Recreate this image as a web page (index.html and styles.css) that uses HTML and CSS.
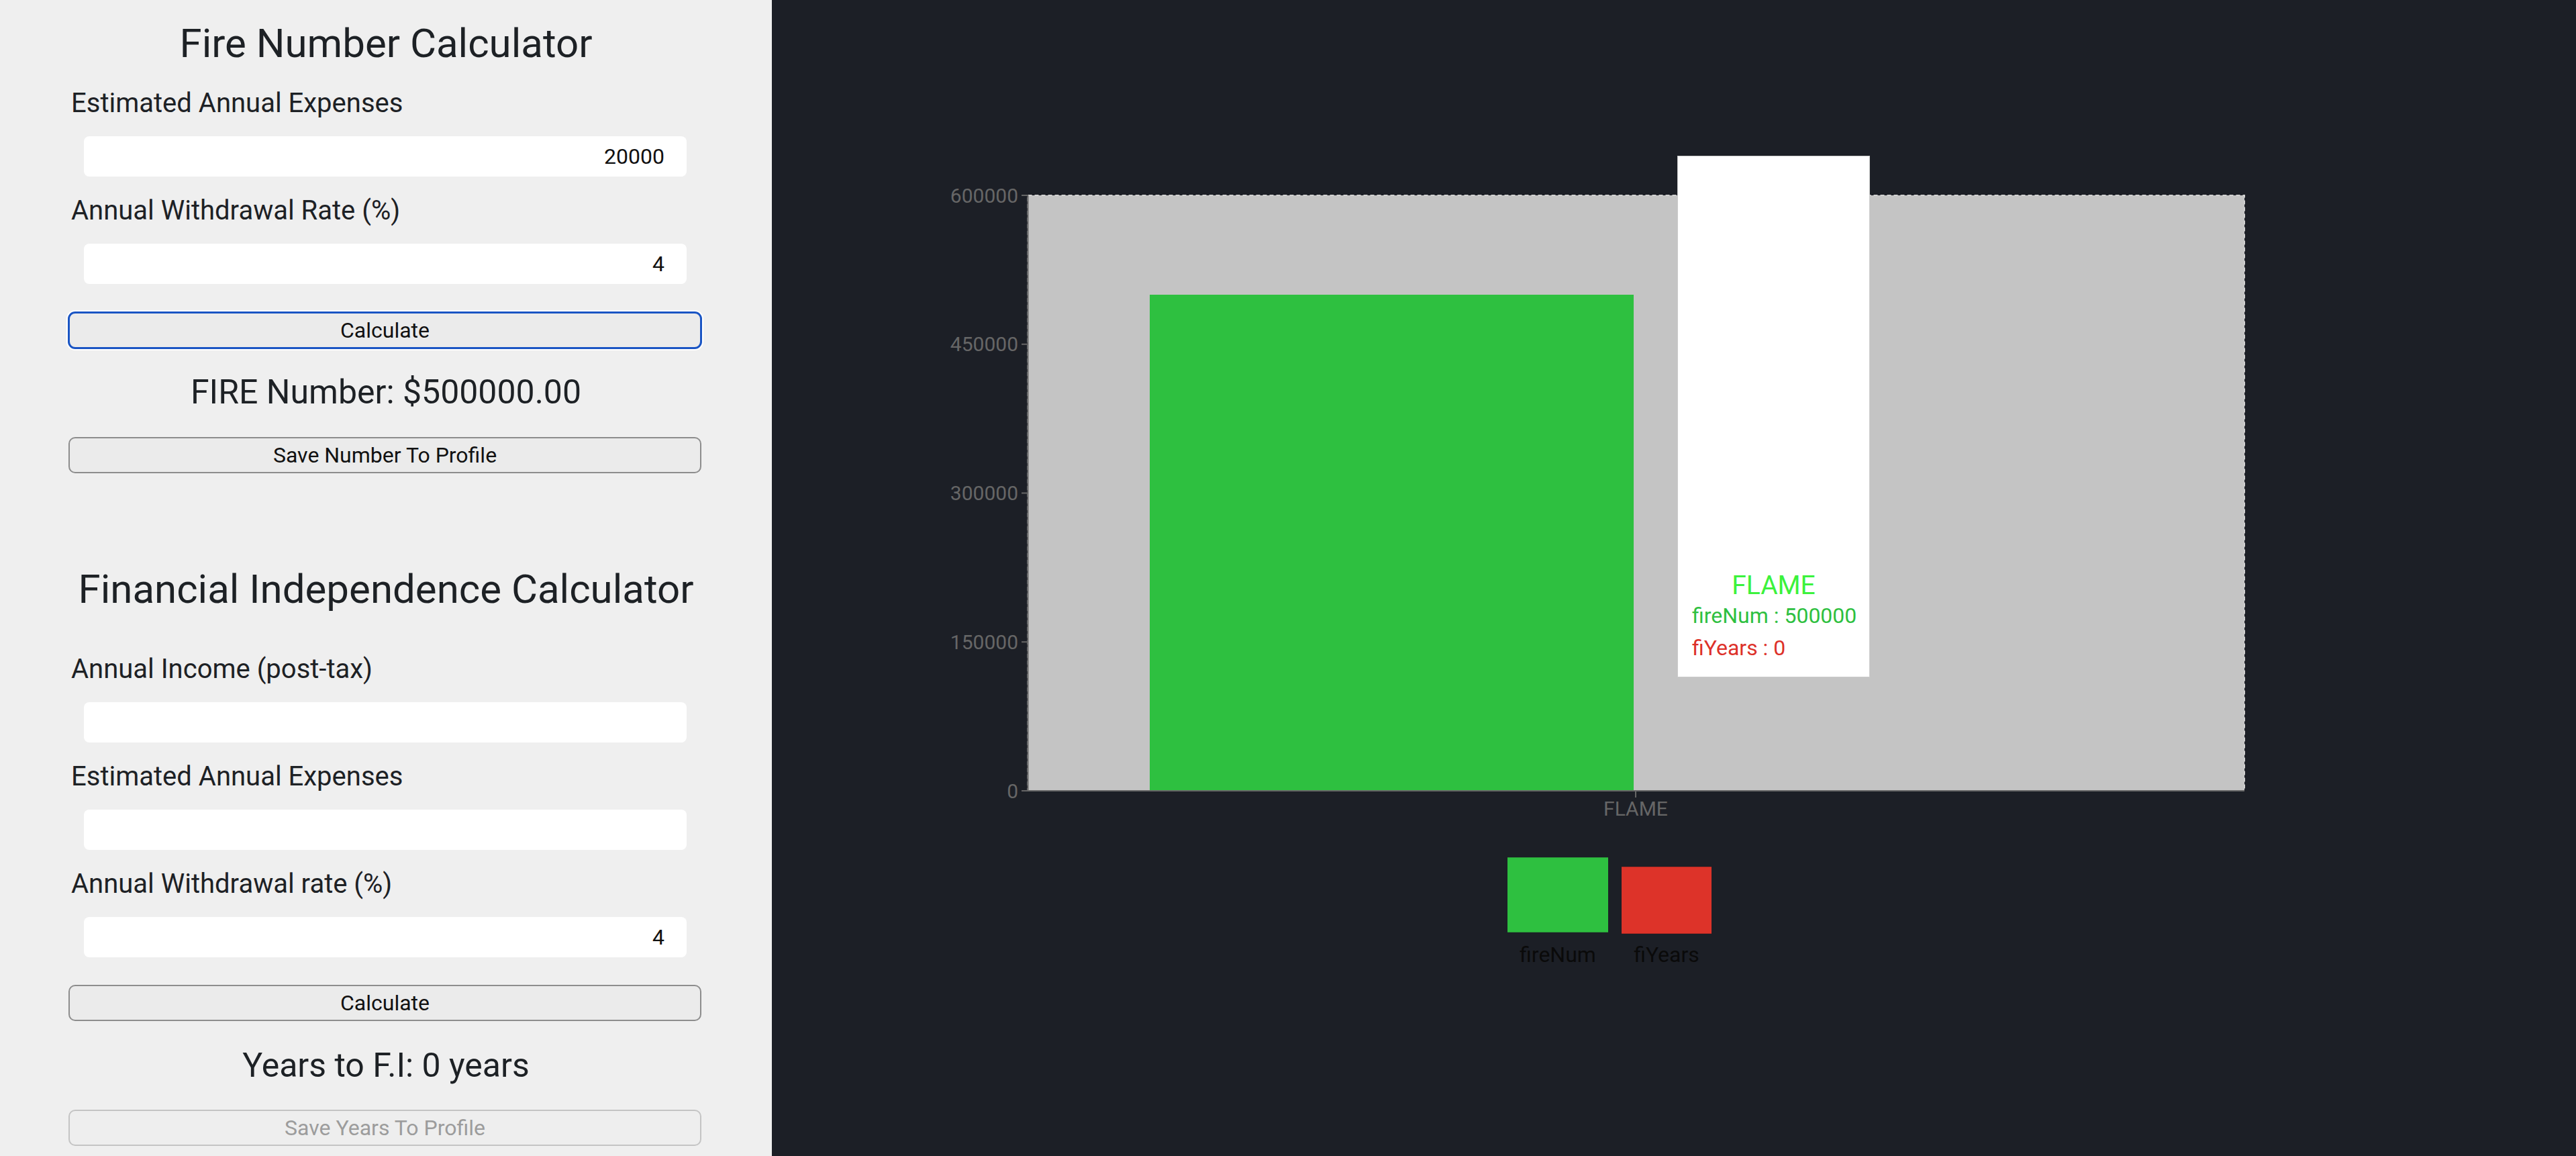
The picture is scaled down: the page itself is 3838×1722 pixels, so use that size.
FILE: index.html
```html
<!DOCTYPE html>
<html lang="en">
<head>
<meta charset="utf-8">
<title>FIRE Calculator</title>
<link rel="stylesheet" href="styles.css">
</head>
<body>
<div class="app">
  <aside class="panel">
    <section class="calc">
      <h2 class="calc-title">Fire Number Calculator</h2>
      <label class="field-label first">Estimated Annual Expenses</label>
      <input class="field-input" type="text" value="20000">
      <label class="field-label">Annual Withdrawal Rate (%)</label>
      <input class="field-input" type="text" value="4">
      <button class="btn btn-calc btn-focus">Calculate</button>
      <div class="result">FIRE Number: $500000.00</div>
      <button class="btn btn-save">Save Number To Profile</button>
    </section>
    <section class="calc calc-second">
      <h2 class="calc-title">Financial Independence Calculator</h2>
      <label class="field-label first-wide">Annual Income (post-tax)</label>
      <input class="field-input" type="text" value="">
      <label class="field-label">Estimated Annual Expenses</label>
      <input class="field-input" type="text" value="">
      <label class="field-label">Annual Withdrawal rate (%)</label>
      <input class="field-input" type="text" value="4">
      <button class="btn btn-calc">Calculate</button>
      <div class="result">Years to F.I: 0 years</div>
      <button class="btn btn-save" disabled>Save Years To Profile</button>
    </section>
  </aside>
  <main class="chart-area">
    <div class="chart">
      <svg class="chart-svg" width="2688" height="1250" viewBox="0 0 2688 1250">
        <rect x="381.5" y="291" width="1812.5" height="887" fill="#c4c4c4"/>
        <rect x="381.5" y="291" width="1812.5" height="887" fill="none" stroke="#d2d2d2" stroke-width="2" stroke-dasharray="6 4"/>
        <rect x="563" y="439" width="721" height="739" fill="#2ec040"/>
        <line x1="381.5" y1="291" x2="381.5" y2="1178" stroke="#666" stroke-width="2"/>
        <line x1="381.5" y1="1178" x2="2194" y2="1178" stroke="#666" stroke-width="2"/>
        <g stroke="#666" stroke-width="2">
          <line x1="372" y1="291" x2="382" y2="291"/>
          <line x1="372" y1="512.75" x2="382" y2="512.75"/>
          <line x1="372" y1="734.5" x2="382" y2="734.5"/>
          <line x1="372" y1="956.25" x2="382" y2="956.25"/>
          <line x1="372" y1="1178" x2="382" y2="1178"/>
          <line x1="1287" y1="1178" x2="1287" y2="1188"/>
        </g>
        <g class="axis-text" text-anchor="end">
          <text x="367" y="301.5">600000</text>
          <text x="367" y="523">450000</text>
          <text x="367" y="745">300000</text>
          <text x="367" y="966.5">150000</text>
          <text x="367" y="1188.5">0</text>
        </g>
        <text class="axis-text" x="1287" y="1214.5" text-anchor="middle">FLAME</text>
      </svg>
      <div class="tooltip">
        <div class="tooltip-label">FLAME</div>
        <div class="tooltip-item item-fire">fireNum : 500000</div>
        <div class="tooltip-item item-years">fiYears : 0</div>
      </div>
    </div>
    <div class="legend">
      <div class="legend-item">
        <span class="swatch swatch-fire"></span>
        <span class="legend-text text-fire">fireNum</span>
      </div>
      <div class="legend-item">
        <span class="swatch swatch-years"></span>
        <span class="legend-text text-years">fiYears</span>
      </div>
    </div>
  </main>
</div>
</body>
</html>
```

FILE: styles.css
```css
* { box-sizing: border-box; }

html, body {
  margin: 0;
  padding: 0;
}

body {
  font-family: "Roboto", "Liberation Sans", Arial, sans-serif;
  color: #1d2125;
  background: #1c1f26;
}

.app {
  display: flex;
  width: 3838px;
  height: 1722px;
  overflow: hidden;
}

.panel {
  width: 1150px;
  flex: 0 0 1150px;
  background: #efefef;
  padding-top: 30px;
}

.calc {
  display: flex;
  flex-direction: column;
  align-items: flex-start;
}

.calc-second .calc-title {
  margin-top: 138px;
}

.calc-title {
  align-self: stretch;
  margin: 0;
  font-size: 60px;
  line-height: 70px;
  font-weight: 400;
  text-align: center;
  color: #1d2125;
}

.field-label {
  display: block;
  margin: 28px 0 0 106px;
  font-size: 40px;
  line-height: 46px;
  color: #1d2125;
}

.field-label.first { margin-top: 31px; }
.field-label.first-wide { margin-top: 61px; }

.field-input {
  display: block;
  margin: 26px 0 0 125px;
  width: 898px;
  height: 60px;
  border: 0;
  border-radius: 8px;
  background: #ffffff;
  padding: 0 33px 0 0;
  text-align: right;
  font-family: "Roboto", "Liberation Sans", Arial, sans-serif;
  font-size: 32px;
  color: #111111;
  outline: none;
}

.btn {
  display: block;
  margin-left: 102px;
  width: 943px;
  height: 54px;
  border: 2px solid #8d8d8d;
  border-radius: 10px;
  background: #ebebeb;
  padding: 0;
  font-family: "Roboto", "Liberation Sans", Arial, sans-serif;
  font-size: 32px;
  color: #111111;
}

.btn-calc { margin-top: 41px; }
.calc:first-child .btn-calc { margin-top: 42px; }

.btn-focus {
  border-color: #1a55c4;
  box-shadow: 0 0 0 1px #1a55c4, 0 0 0 3px #ffffff;
}

.btn-save { margin-top: 37px; }

.btn-save:disabled {
  border-color: #c4c4c4;
  background: #eeeeee;
  color: #9c9c9c;
}

.result {
  align-self: stretch;
  margin-top: 37px;
  font-size: 50px;
  line-height: 58px;
  text-align: center;
  color: #1d2125;
}

.calc:first-child .result { margin-top: 36px; }
.calc:first-child .btn-save { margin-top: 38px; }

.chart-area {
  flex: 1;
  background: #1c1f26;
  display: flex;
  flex-direction: column;
}

.chart {
  position: relative;
  width: 2688px;
  height: 1250px;
}

.chart-svg {
  display: block;
}

.axis-text {
  font-family: "Roboto", "Liberation Sans", Arial, sans-serif;
  font-size: 30px;
  fill: #666666;
}

.tooltip {
  position: absolute;
  left: 1349px;
  top: 232px;
  width: 287px;
  height: 777px;
  background: #ffffff;
  border: 1px solid #cccccc;
  display: flex;
  flex-direction: column;
  justify-content: flex-end;
  padding: 0 8px 19px 21px;
}

.tooltip-label {
  font-size: 39px;
  line-height: 42px;
  text-align: center;
  color: #3cf23c;
  padding-right: 13px;
}

.tooltip-item {
  font-size: 32px;
  line-height: 48px;
  white-space: nowrap;
}

.item-fire { color: #2ec040; }
.item-years { color: #dd3129; }

.legend {
  display: flex;
  align-items: flex-end;
  gap: 20px;
  margin: 27px 0 0 1096px;
}

.legend-item {
  display: flex;
  flex-direction: column;
  align-items: center;
}

.swatch {
  display: block;
}

.swatch-fire {
  width: 150px;
  height: 112px;
  background: #2ec040;
  border-top: 1px solid #2a9a38;
  border-bottom: 1px solid #2a9a38;
  margin-bottom: 14px;
}

.swatch-years {
  width: 134px;
  height: 100px;
  background: #dd3329;
  border-top: 1px solid #b52a23;
  border-bottom: 1px solid #b52a23;
  margin-bottom: 12px;
}

.legend-text {
  font-size: 32px;
  line-height: 38px;
  color: #0a0a0a;
}
```
